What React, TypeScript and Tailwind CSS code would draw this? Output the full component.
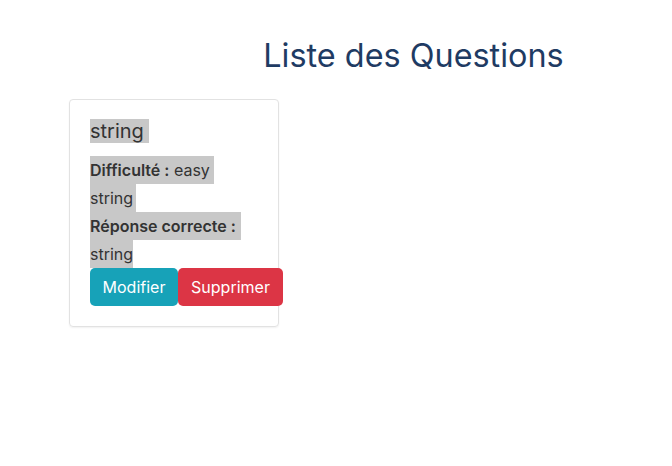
export default function App() {
  return (
    <div className="min-h-[466px] bg-white text-[#333] font-['Inter',sans-serif]">
      <h1 className="ml-[155px] pt-[37px] text-center text-[32.4px] leading-[38px] text-[#1f3b63]">
        Liste des Questions
      </h1>
      <div className="mt-[24px] ml-[69px] w-[210px] rounded-[4px] border border-[#e2e2e2] p-5 pr-0 shadow-[0_1px_2px_rgba(0,0,0,0.06)]">
        <div className="text-[20px] leading-[23px]">
          <span className="bg-[#c8c8c8] pr-[5px]">string</span>
        </div>
        <div className="mt-[13px] text-[16px] leading-[28px]">
          <span className="inline-block bg-[#c8c8c8] pr-[4px]">
            <b className="font-semibold">Difficulté :</b> easy
          </span>
          <br />
          <span className="inline-block bg-[#c8c8c8] pr-[3px]">string</span>
          <br />
          <span className="inline-block bg-[#c8c8c8] pr-[5px]">
            <b className="font-semibold">Réponse correcte :</b>
          </span>
          <br />
          <span className="inline-block bg-[#c8c8c8]">string</span>
        </div>
        <div className="flex">
          <button className="h-[38px] w-[88px] shrink-0 rounded-[5px] bg-[#17a2b8] text-[16px] text-white">Modifier</button>
          <button className="h-[38px] w-[105px] shrink-0 rounded-[5px] bg-[#dc3545] text-[16px] text-white">Supprimer</button>
        </div>
      </div>
    </div>
  )
}
